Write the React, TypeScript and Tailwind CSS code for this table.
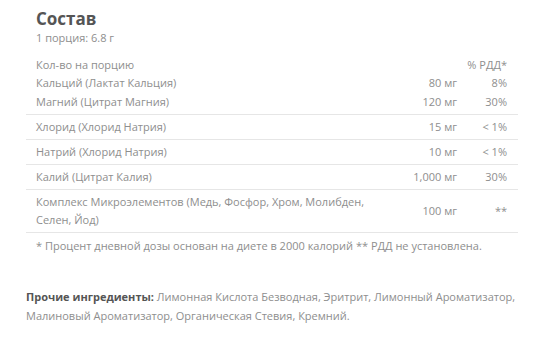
const rows = [
  { name: 'Хлорид (Хлорид Натрия)', amount: '15 мг', pct: '< 1%' },
  { name: 'Натрий (Хлорид Натрия)', amount: '10 мг', pct: '< 1%' },
  { name: 'Калий (Цитрат Калия)', amount: '1,000 мг', pct: '30%' },
  {
    name: 'Комплекс Микроэлементов (Медь, Фосфор, Хром, Молибден, Селен, Йод)',
    amount: '100 мг',
    pct: '**',
  },
];

function Row({ name, amount, pct, bordered = true }: { name: string; amount: string; pct: string; bordered?: boolean }) {
  return (
    <div className={`flex items-center ${bordered ? 'border-b border-[#e6e6e6] py-[3px]' : ''}`}>
      <div className="flex-1 pl-[10px]">{name}</div>
      <div className="w-[70px] text-right">{amount}</div>
      <div className="w-[61px] pr-[11px] text-right">{pct}</div>
    </div>
  );
}

export default function App() {
  return (
    <div className="w-[534px] h-[343px] bg-white font-['Open_Sans',sans-serif] text-[#8e8e8e] text-[11px] leading-[18px]">
      <div className="pl-[26px] pr-[16px] pt-[9px]">
        <div className="pl-[10px]">
          <h2 className="text-[17px] leading-[20px] font-bold text-[#555]">Состав</h2>
          <div>1 порция: 6.8 г</div>
        </div>

        <div className="mt-[9px]">
          <div className="flex">
            <div className="flex-1 pl-[10px]">Кол-во на порцию</div>
            <div className="w-[61px] pr-[11px] text-right">% РДД*</div>
          </div>
          <div className="border-b border-[#e6e6e6] pb-[3px]">
            <Row name="Кальций (Лактат Кальция)" amount="80 мг" pct="8%" bordered={false} />
            <div className="mt-[1px]">
              <Row name="Магний (Цитрат Магния)" amount="120 мг" pct="30%" bordered={false} />
            </div>
          </div>
          {rows.map((r) => (
            <Row key={r.name} name={r.name} amount={r.amount} pct={r.pct} />
          ))}
          <div className="pl-[10px] mt-[4px]">
            * Процент дневной дозы основан на диете в 2000 калорий ** РДД не установлена.
          </div>
        </div>
      </div>

      <p className="mt-[32px] pl-[26px] pr-[8px] leading-[19px]">
        <span className="font-bold text-[#555]">Прочие ингредиенты:</span> Лимонная Кислота
        Безводная, Эритрит, Лимонный Ароматизатор, Малиновый Ароматизатор, Органическая Стевия,
        Кремний.
      </p>
    </div>
  );
}
